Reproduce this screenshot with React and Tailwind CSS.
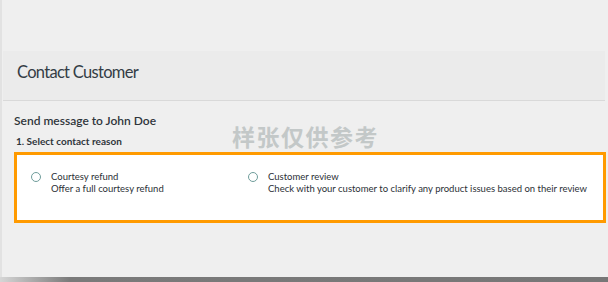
export default function App() {
  return (
    <div className="relative w-[608px] h-[282px] bg-[#efefef] overflow-hidden" style={{ fontFamily: 'Lato, "Noto Sans", sans-serif' }}>
      <div className="h-[277px] border-l-[2px] border-[#e2e2e2] flex flex-col">
        <div className="h-[51px]" />
        <div className="ml-[1px] mr-[3px] h-[50px] bg-[#ebebeb] border-b border-[#d9d9d9] pl-[14px] pt-[9px]">
          <span className="text-[16.5px] tracking-[-0.7px] text-[#343d45] leading-[18px]">Contact Customer</span>
        </div>
        <div className="pl-[12px] pr-[2px] pt-[12px]">
          <div className="text-[12px] font-semibold text-[#2f363c] leading-[16px]">Send message to John Doe</div>
          <div className="mt-[6px] ml-[2px] text-[10px] font-bold text-[#2f363c] leading-[13px]">1. Select contact reason</div>
          <div className="mt-[4px] h-[71px] border-[3px] border-[#ff9a00] bg-white flex pl-[14px] pt-[16px] text-[9.5px] text-[#2b3036] leading-[12px]">
            <div className="w-[217px] flex">
              <span className="mt-[1px] w-[10px] h-[10px] rounded-full border border-[#6f9d9b]" />
              <div className="ml-[10px]">
                <div>Courtesy refund</div>
                <div>Offer a full courtesy refund</div>
              </div>
            </div>
            <div className="flex">
              <span className="mt-[1px] w-[10px] h-[10px] rounded-full border border-[#6f9d9b]" />
              <div className="ml-[10px]">
                <div>Customer review</div>
                <div>Check with your customer to clarify any product issues based on their review</div>
              </div>
            </div>
          </div>
        </div>
      </div>
      <div className="h-[5px] bg-[linear-gradient(to_right,#d6d6d6,#7a7a7a_70px,#777777)]" />
      <div className="absolute left-[232px] top-[125px] text-[23px] font-bold text-[#c3c8c8] tracking-[1.5px] leading-none" style={{ fontFamily: '"Noto Sans CJK SC", sans-serif' }}>样张仅供参考</div>
    </div>
  );
}
